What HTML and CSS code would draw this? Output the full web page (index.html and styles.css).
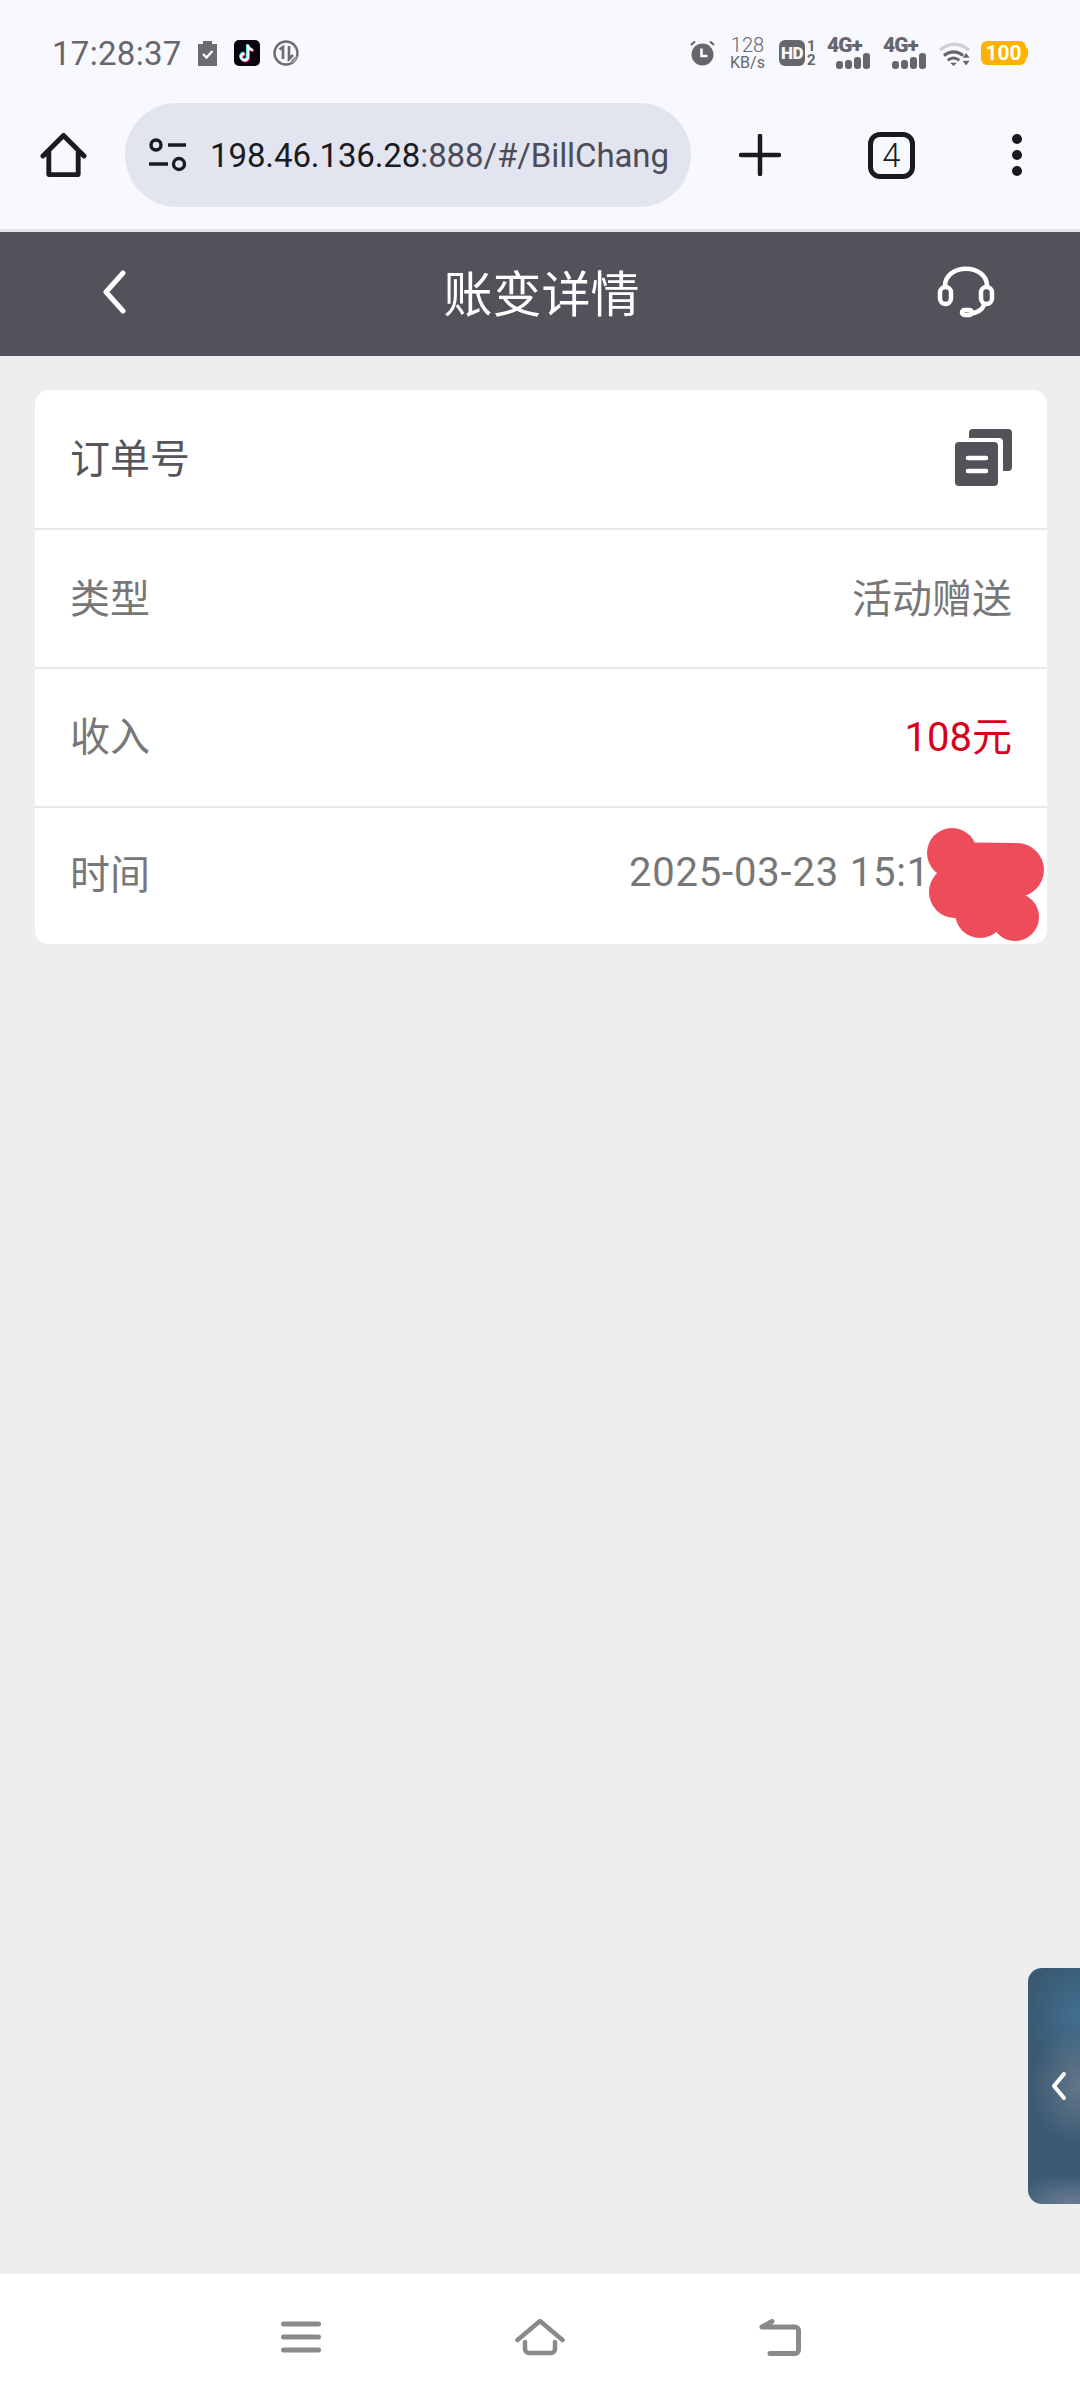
FILE: index.html
```html
<!DOCTYPE html>
<html lang="zh-CN">
<head>
    <meta charset="UTF-8">
    <meta name="viewport" content="width=device-width, initial-scale=1.0">
    <title>账变详情</title>
    <link rel="stylesheet" href="styles.css">
</head>
<body>
    <div class="chrome">
        <div class="status-bar">
            <div class="status-left">
                <span class="clock">17:28:37</span>
                <svg class="icon-clip" viewBox="0 0 19 25"><path d="M0 3h5V0h9v3h5v22H0z" fill="#6b6b70"/><path d="M5 13l3.500 3.500L14.500 10" fill="none" stroke="#fff" stroke-width="2.400"/></svg>
                <svg class="icon-tiktok" viewBox="0 0 26 26"><rect width="26" height="26" rx="5" fill="#0a0410"/><path d="M14 5v12a3.400 3.400 0 1 1-3.400-3.400M14 5c.4 3 2.400 4.800 5 5" fill="none" stroke="#f0305a" stroke-width="2.600" transform="translate(.8 .8)"/><path d="M14 5v12a3.400 3.400 0 1 1-3.400-3.400M14 5c.4 3 2.400 4.800 5 5" fill="none" stroke="#4fe3e0" stroke-width="2.600" transform="translate(-.8 -.8)"/><path d="M14 5v12a3.400 3.400 0 1 1-3.400-3.400M14 5c.4 3 2.400 4.800 5 5" fill="none" stroke="#fff" stroke-width="2.200"/></svg>
                <svg class="icon-data" viewBox="0 0 26 26"><circle cx="13" cy="13" r="11.500" fill="none" stroke="#6b6b70" stroke-width="2.400"/><path d="M6.500 9.500l3.500-2.500v12M16 6v13l4-4" fill="none" stroke="#6b6b70" stroke-width="2.600"/><path d="M17 23c1-4 4-6 8-7-1 4-3 7-8 7z" fill="#9a9a9f"/></svg>
            </div>
            <div class="status-right">
                <svg class="icon-alarm" viewBox="0 0 25 26"><circle cx="12.500" cy="14.500" r="11" fill="#66666b"/><path d="M11.500 8.500v7.500h6" fill="none" stroke="#fff" stroke-width="2.600"/><path d="M1 5l4-3.500M24 5l-4-3.500" stroke="#66666b" stroke-width="2.200"/></svg>
                <div class="speed"><span>128</span><span>KB/s</span></div>
                <div class="hd"><span class="hd-box">HD</span><div class="hd-nums"><span>1</span><span>2</span></div></div>
                <div class="net"><span class="net-label">4G+</span><div class="bars"><i class="b1"></i><i class="b2"></i><i class="b3"></i><i class="b4"></i></div></div>
                <div class="net"><span class="net-label">4G+</span><div class="bars"><i class="b1"></i><i class="b2"></i><i class="b3"></i><i class="b4"></i></div></div>
                <svg class="icon-wifi" viewBox="0 0 32 25"><path d="M1 9Q16-3 31 9" fill="none" stroke="#cfcfd4" stroke-width="3.500"/><path d="M5 14.500Q15 7 25 14.500" fill="none" stroke="#66666b" stroke-width="3.200"/><path d="M9 19.500Q15 15 21 19.500" fill="none" stroke="#66666b" stroke-width="3"/><path d="M11.500 22h7l-3.500 3.500zM28 12l3.500 5h-7zM28 25l-3.500-5h7z" fill="#66666b"/></svg>
                <div class="battery">100</div>
            </div>
        </div>
        <div class="toolbar">
            <svg class="icon-home" viewBox="0 0 48 48"><path d="M3 25L24 4l21 21M9 21v23h30V21" fill="none" stroke="#1a1b20" stroke-width="5" stroke-linejoin="round" stroke-linecap="round"/></svg>
            <div class="url-pill">
                <svg class="icon-tune" viewBox="0 0 39 34"><circle cx="8" cy="7" r="5" fill="none" stroke="#1a1b20" stroke-width="3.400"/><path d="M20 7h18M1 26h19" stroke="#1a1b20" stroke-width="3.400"/><circle cx="31" cy="26" r="5.500" fill="none" stroke="#1a1b20" stroke-width="3.400"/></svg>
                <div class="url"><span class="url-host">198.46.136.28</span><span class="url-rest">:888/#/BillChang</span></div>
            </div>
            <svg class="icon-plus" viewBox="0 0 42 42"><path d="M21 2v38M2 21h38" stroke="#1a1b20" stroke-width="4.500" stroke-linecap="round"/></svg>
            <div class="tab-count">4</div>
            <div class="more"><i></i><i></i><i></i></div>
        </div>
    </div>

    <header class="page-header">
        <svg class="icon-back" viewBox="0 0 24 44"><path d="M21 3L4 22l17 19" fill="none" stroke="#fff" stroke-width="5" stroke-linecap="round" stroke-linejoin="round"/></svg>
        <h1>账变详情</h1>
        <svg class="icon-headset" viewBox="0 0 58 54"><path d="M8 21C8 -2 50 -2 50 21" fill="none" stroke="#fff" stroke-width="4.500"/><rect x="3" y="22" width="11" height="17" rx="5.500" fill="none" stroke="#fff" stroke-width="4.500"/><rect x="44" y="22" width="11" height="17" rx="5.500" fill="none" stroke="#fff" stroke-width="4.500"/><path d="M47 40c-2 6-8 8-15 9" fill="none" stroke="#fff" stroke-width="4.500"/><rect x="25" y="45" width="10" height="5" rx="2.500" fill="none" stroke="#fff" stroke-width="4.500"/></svg>
    </header>

    <main class="content">
        <section class="card">
            <div class="row row-head">
                <span class="label label-dark">订单号</span>
                <svg class="icon-copy" viewBox="0 0 57 57"><path d="M14 4a4 4 0 0 1 4-4h35a4 4 0 0 1 4 4v34a4 4 0 0 1-4 4h-5V13a4 4 0 0 0-4-4H14z" fill="#52525b"/><rect x="0" y="13" width="43" height="44" rx="4" fill="#52525b"/><path d="M13 29h18M13 42h18" stroke="#fff" stroke-width="4.500" stroke-linecap="round"/></svg>
            </div>
            <div class="row">
                <span class="label">类型</span>
                <span class="value">活动赠送</span>
            </div>
            <div class="row row-low">
                <span class="label">收入</span>
                <span class="value value-red">108元</span>
            </div>
            <div class="row row-low">
                <span class="label">时间</span>
                <span class="value value-time">2025-03-23 15:1</span>
            </div>
            <svg class="blob" viewBox="0 0 117 114"><g fill="#ee4c5b"><circle cx="25" cy="26" r="25"/><circle cx="90" cy="43" r="27"/><circle cx="88" cy="90" r="24"/><circle cx="53" cy="86" r="25"/><circle cx="28" cy="65" r="26"/><path d="M25 25L48 15.500 88 16 100 60 88 90H53L28 64z"/></g></svg>
        </section>
    </main>

    <div class="side-tab">
        <svg class="icon-side" viewBox="0 0 16 30"><path d="M13 3L3 15l10 12" fill="none" stroke="#fff" stroke-width="4" stroke-linecap="round" stroke-linejoin="round"/></svg>
    </div>

    <nav class="nav-bar">
        <svg class="icon-menu" viewBox="0 0 40 32"><path d="M2.500 3h35M2.500 16h35M2.500 29h35" stroke="#8a8a8a" stroke-width="5" stroke-linecap="round"/></svg>
        <svg class="icon-navhome" viewBox="0 0 50 38"><path d="M2.500 22L25 3l22.500 19M10 24v7a4 4 0 0 0 4 4h22a4 4 0 0 0 4-4v-7" fill="none" stroke="#8a8a8a" stroke-width="4.500" stroke-linecap="round" stroke-linejoin="round"/></svg>
        <svg class="icon-navback" viewBox="0 0 42 37"><path d="M3 8h33a3.500 3.500 0 0 1 3.500 3.500v19.500a3.500 3.500 0 0 1-3.500 3.500H11M3 8l10-5.500" fill="none" stroke="#8a8a8a" stroke-width="5" stroke-linecap="round" stroke-linejoin="round"/></svg>
    </nav>
</body>
</html>
```

FILE: styles.css
```css
* {
    box-sizing: border-box;
}

html, body {
    margin: 0;
    padding: 0;
}

body {
    position: relative;
    width: 1080px;
    height: 2400px;
    display: flex;
    flex-direction: column;
    background-color: #eeeeee;
    font-family: Roboto, "Noto Sans CJK SC", sans-serif;
    overflow: hidden;
}

svg {
    display: block;
    flex: none;
}

/* browser chrome */
.chrome {
    height: 232px;
    background-color: #f8f8ff;
    border-bottom: 3px solid #e6e6ea;
}

.status-bar {
    height: 103px;
    padding: 3px 52px 0 52px;
    display: flex;
    justify-content: space-between;
    align-items: center;
    color: #66666b;
}

.status-left,
.status-right {
    display: flex;
    align-items: center;
}

.clock {
    width: 146px;
    font-size: 33px;
    letter-spacing: 0.3px;
}

.icon-clip {
    width: 19px;
    height: 25px;
    margin-right: 17px;
}

.icon-tiktok,
.icon-data {
    width: 26px;
    height: 26px;
}

.icon-data {
    margin-left: 13px;
}

.icon-alarm {
    width: 25px;
    height: 26px;
}

.speed {
    width: 33px;
    margin-left: 16px;
    display: flex;
    flex-direction: column;
    align-items: center;
    font-size: 16px;
    line-height: 16px;
    white-space: nowrap;
}

.speed span:first-child {
    font-size: 20px;
    font-weight: 300;
    line-height: 20px;
}

.hd {
    margin-left: 15px;
    display: flex;
    align-items: center;
}

.hd-box {
    width: 26px;
    height: 26px;
    border-radius: 6px;
    background-color: #66666b;
    color: #f8f8ff;
    font-size: 17px;
    font-weight: 900;
    line-height: 26px;
    text-align: center;
    letter-spacing: -0.5px;
}

.hd-nums {
    width: 8px;
    margin-left: 2px;
    display: flex;
    flex-direction: column;
    font-size: 15px;
    font-weight: 700;
    line-height: 14px;
}

.net {
    width: 44px;
    margin-left: 12px;
    display: flex;
    flex-direction: column;
}

.net-label {
    height: 16px;
    font-size: 21px;
    line-height: 16px;
    font-weight: 900;
    letter-spacing: -1px;
    white-space: nowrap;
}

.bars {
    height: 16px;
    margin-left: 9px;
    display: flex;
    align-items: flex-end;
    gap: 2px;
}

.bars i {
    width: 7px;
    border-radius: 3px;
    background-color: #66666b;
}

.bars .b1 { height: 8px; }
.bars .b2 { height: 9px; }
.bars .b3 { height: 12px; }
.bars .b4 { height: 16px; }

.icon-wifi {
    width: 31px;
    height: 25px;
    margin-left: 12px;
}

.battery {
    position: relative;
    width: 45px;
    height: 24px;
    margin: 0 2px 0 11px;
    border-radius: 6px;
    background-color: #ffb300;
    color: #fff;
    font-size: 21px;
    font-weight: 700;
    line-height: 24px;
    text-align: center;
}

.battery::after {
    content: "";
    position: absolute;
    top: 7px;
    right: -2px;
    width: 2px;
    height: 10px;
    border-radius: 0 2px 2px 0;
    background-color: #ffb300;
}

.toolbar {
    height: 104px;
    padding-left: 40px;
    display: flex;
    align-items: center;
}

.icon-home {
    width: 47px;
    height: 48px;
}

.url-pill {
    width: 566px;
    height: 104px;
    margin-left: 38px;
    padding: 0 16px 0 23px;
    border-radius: 52px;
    background-color: #e2e4f0;
    display: flex;
    align-items: center;
    overflow: hidden;
}

.icon-tune {
    width: 39px;
    height: 34px;
}

.url {
    margin-left: 23px;
    font-size: 33px;
    letter-spacing: -0.1px;
    white-space: nowrap;
}

.url-host {
    color: #1a1b20;
}

.url-rest {
    color: #4b4c57;
}

.icon-plus {
    width: 42px;
    height: 42px;
    margin-left: 48px;
}

.tab-count {
    width: 47px;
    height: 47px;
    margin-left: 87px;
    border: 5px solid #1a1b20;
    border-radius: 12px;
    color: #1a1b20;
    font-size: 33px;
    font-weight: 300;
    line-height: 37px;
    text-align: center;
}

.more {
    height: 42px;
    margin-left: 97px;
    display: flex;
    flex-direction: column;
    justify-content: space-between;
}

.more i {
    display: block;
    width: 10px;
    height: 10px;
    border-radius: 50%;
    background-color: #1a1b20;
}

/* page header */
.page-header {
    height: 124px;
    padding: 0 85px 0 88px;
    background-color: #52525b;
    display: grid;
    grid-template-columns: 1fr auto 1fr;
    align-items: center;
}

.page-header h1 {
    margin: 0;
    padding-bottom: 8px;
    color: #fff;
    font-size: 49px;
    font-weight: 400;
}

.icon-back {
    width: 24px;
    height: 44px;
    margin: 0 0 4px 14px;
}

.icon-headset {
    width: 58px;
    height: 54px;
    margin-bottom: 4px;
    justify-self: end;
}

/* detail card */
.content {
    flex: 1;
    padding: 34px 33px 0 35px;
}

.card {
    position: relative;
    border-radius: 14px;
    background-color: #fff;
    overflow: hidden;
}

.row {
    height: 139px;
    padding: 0 35px 6px;
    display: flex;
    justify-content: space-between;
    align-items: center;
    border-bottom: 2px solid #e8e8e8;
    font-size: 40px;
    color: #777777;
}

.row-head {
    height: 140px;
}

.row-low {
    padding-bottom: 8px;
}

.row:last-of-type {
    height: 136px;
    border-bottom: none;
}

.label-dark {
    color: #55555c;
}

.value-red {
    color: #d9001b;
}

.value-time {
    margin-right: 82px;
    letter-spacing: 0.8px;
}

.icon-copy {
    width: 57px;
    height: 57px;
    margin-top: 3px;
}

.blob {
    position: absolute;
    right: 3px;
    bottom: 3px;
    width: 117px;
    height: 114px;
}

/* floating side tab */
.side-tab {
    position: absolute;
    top: 1968px;
    right: 0;
    width: 52px;
    height: 236px;
    padding-left: 23px;
    border-radius: 14px 0 0 14px;
    background:
        radial-gradient(ellipse 50px 60px at 100% 50%, #64778a 0, rgba(100, 119, 138, 0) 100%),
        radial-gradient(ellipse 60px 30px at 80% 100%, #6a7d94 0, rgba(106, 125, 148, 0) 100%),
        radial-gradient(ellipse 50px 60px at 100% 20%, #41708f 0, rgba(65, 112, 143, 0) 100%);
    background-color: #3a5a73;
    display: flex;
    align-items: center;
}

.icon-side {
    width: 16px;
    height: 30px;
}

/* system navigation */
.nav-bar {
    height: 126px;
    padding: 0 279px 0 281px;
    background-color: #fff;
    display: flex;
    justify-content: space-between;
    align-items: center;
}

.icon-menu {
    width: 40px;
    height: 32px;
}

.icon-navhome {
    width: 50px;
    height: 38px;
}

.icon-navback {
    width: 42px;
    height: 37px;
}
```
